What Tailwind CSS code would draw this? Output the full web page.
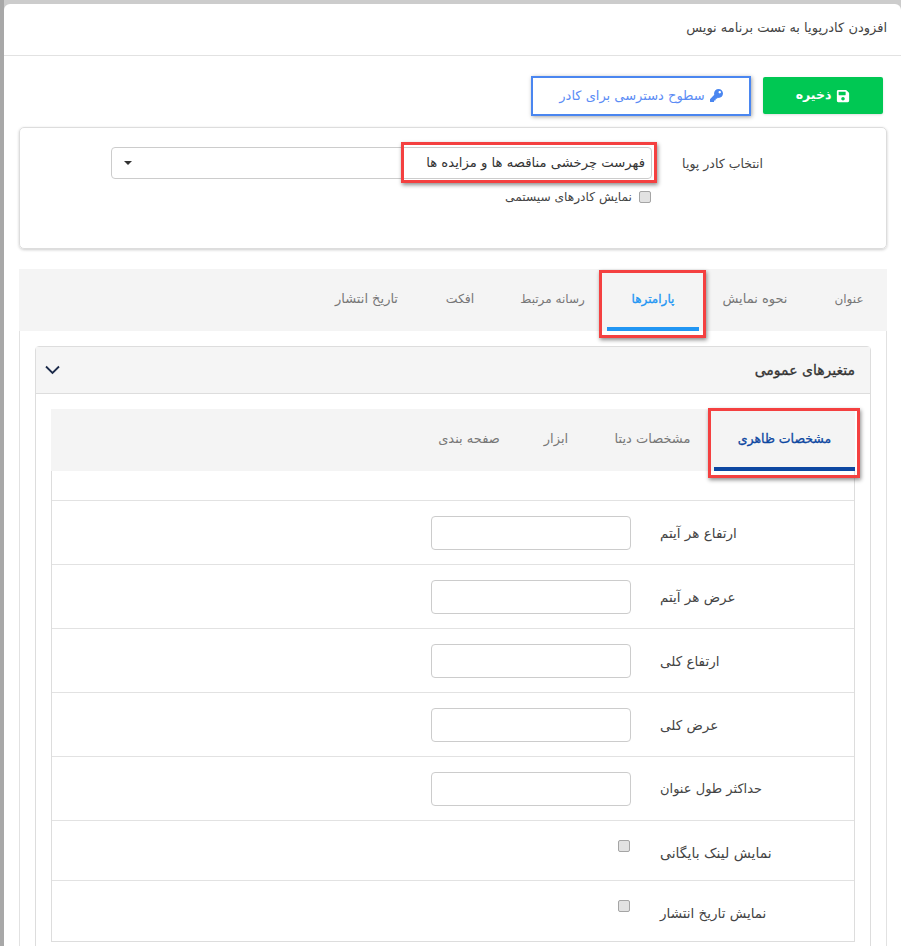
<!DOCTYPE html>
<html lang="fa" dir="rtl">
<head>
    <meta charset="UTF-8">
    <meta name="viewport" content="width=device-width, initial-scale=1.0">
    <title>افزودن کادرپویا</title>
    <script src="https://cdn.jsdelivr.net/npm/@tailwindcss/browser@4"></script>
</head>
<body class="bg-[linear-gradient(to_right,#a8a8a8_4px,#cccccc_4px)] font-['DejaVu_Sans',sans-serif] text-[13px] text-[#333] h-[946px] overflow-hidden">
    <div class="mt-[4px] ml-[4px] bg-white rounded-t-[6px] h-[942px] overflow-hidden">
        <header class="h-[52px] border-b border-[#e2e2e2] flex items-center pr-[14px] pb-[3px] text-[#444]">
            افزودن کادرپویا به تست برنامه نویس
        </header>

        <div class="flex items-center gap-[12px] pr-[18px] h-[71px] pt-[8px]">
            <button class="w-[120px] h-[37px] bg-[#00c853] rounded-[2px] text-white text-[12.5px] font-bold shadow-sm flex items-center justify-center gap-[5px]">
                <svg class="w-[14px] h-[14px] fill-white" viewBox="0 0 448 512"><path d="M433.941 129.941l-83.882-83.882A48 48 0 0 0 316.118 32H48C21.49 32 0 53.49 0 80v352c0 26.51 21.49 48 48 48h352c26.51 0 48-21.49 48-48V163.882a48 48 0 0 0-14.059-33.941zM224 416c-35.346 0-64-28.654-64-64 0-35.346 28.654-64 64-64s64 28.654 64 64c0 35.346-28.654 64-64 64zm96-304.52V212c0 6.627-5.373 12-12 12H76c-6.627 0-12-5.373-12-12V108c0-6.627 5.373-12 12-12h228.52c3.183 0 6.235 1.264 8.485 3.515l3.48 3.48A11.996 11.996 0 0 1 320 111.48z"/></svg>
                ذخیره
            </button>
            <button class="w-[220px] h-[40px] bg-white border-2 border-[#4a86f0] text-[#5b8cf5] shadow-[1px_1px_4px_rgba(0,0,0,0.35)] flex items-center justify-center gap-[5px]">
                <svg class="w-[13px] h-[13px] fill-[#4a86f0]" viewBox="0 0 512 512"><path d="M512 176.001C512 273.203 433.202 352 336 352c-11.22 0-22.19-1.062-32.827-3.069l-24.012 27.014A23.999 23.999 0 0 1 261.223 384H224v40c0 13.255-10.745 24-24 24h-40v40c0 13.255-10.745 24-24 24H24c-13.255 0-24-10.745-24-24v-78.059c0-6.365 2.529-12.47 7.029-16.971l161.802-161.802C163.108 213.814 160 195.271 160 176 160 78.798 238.797.001 335.999 0 433.488-.001 512 78.511 512 176.001zM336 128c0 26.51 21.49 48 48 48s48-21.49 48-48-21.49-48-48-48-48 21.49-48 48z"/></svg>
                سطوح دسترسی برای کادر
            </button>
        </div>

        <section class="mr-[14px] ml-[15px] h-[122px] border border-[#ddd] rounded-[5px] shadow-[0_1px_3px_rgba(0,0,0,0.2)] flex pt-[19px]">
            <label class="w-[234px] pr-[123px] pt-[8px] text-[12.5px] text-[#444] shrink-0">انتخاب کادر پویا</label>
            <div class="w-[541px]">
                <div class="relative h-[32px] border border-[#ccc] rounded-[4px] flex items-center justify-between pr-[6px] pl-[12px]">
                    <span class="text-[13.2px]">فهرست چرخشی مناقصه ها و مزایده ها</span>
                    <span class="w-0 h-0 border-x-[4px] border-x-transparent border-t-[4px] border-t-[#333]"></span>
                    <div class="absolute top-[-6px] right-[-6px] w-[256px] h-[41px] border-[3px] border-[#f44040] shadow-[1px_2px_4px_rgba(0,0,0,0.45)] pointer-events-none"></div>
                </div>
                <label class="flex items-center gap-[7px] mt-[9px] mr-[1px] text-[12.2px] text-[#444]">
                    <input type="checkbox" class="appearance-none w-[12px] h-[12px] bg-[#e2e2e2] border border-[#a5a5a5] rounded-[2px]">
                    نمایش کادرهای سیستمی
                </label>
            </div>
        </section>

        <section class="mt-[20px] mr-[14px] ml-[15px]">
            <nav class="h-[62px] bg-[#f4f4f4] flex text-[#777] text-center leading-[20px]">
                <a class="w-[76px] pt-[20px] text-[12px]">عنوان</a>
                <a class="w-[112px] pt-[20px]">نحوه نمایش</a>
                <a class="relative w-[92px] pt-[20px] text-[12px] text-[#2196f3] [-webkit-text-stroke:0.3px_#2196f3] border-b-[4px] border-[#2196f3]">
                    پارامترها
                    <span class="absolute top-[1px] right-[-7px] left-[-8px] h-[68px] border-[3px] border-[#f44040] shadow-[1px_2px_4px_rgba(0,0,0,0.45)]"></span>
                </a>
                <a class="w-[109px] pt-[20px] text-[12px]">رسانه مرتبط</a>
                <a class="w-[76px] pt-[20px] text-[12.5px]">افکت</a>
                <a class="w-[111px] pt-[20px]">تاریخ انتشار</a>
            </nav>

            <div class="border-x border-[#e2e2e2] px-[15px] pt-[15px] h-[700px]">
                <div class="border border-[#ddd] rounded-t-[4px] h-[700px]">
                    <div class="h-[47px] bg-[#f5f5f5] border-b border-[#ddd] flex items-center justify-between pr-[15px] pl-[9px]">
                        <span class="text-[14px] text-[#333] [-webkit-text-stroke:0.3px_#333]">متغیرهای عمومی</span>
                        <svg class="w-[15px] h-[10px] stroke-[#1c2b4a] fill-none stroke-[1.8]" viewBox="0 0 15 10"><path d="M1 1.5l6.5 6.5 6.5-6.5"/></svg>
                    </div>
                    <div class="px-[15px] pt-[15px]">
                        <nav class="h-[62px] bg-[#f4f4f4] flex text-[#777] text-center leading-[20px]">
                            <a class="relative w-[141px] pt-[20px] text-[12.5px] text-[#0d47a1] [-webkit-text-stroke:0.3px_#0d47a1] border-b-[4px] border-[#0d47a1]">
                                مشخصات ظاهری
                                <span class="absolute top-[-1px] right-[-5px] left-[-6px] h-[70px] border-[3px] border-[#f44040] shadow-[1px_2px_4px_rgba(0,0,0,0.45)]"></span>
                            </a>
                            <a class="w-[123px] pt-[20px]">مشخصات دیتا</a>
                            <a class="w-[70px] pt-[20px]">ابزار</a>
                            <a class="w-[104px] pt-[20px]">صفحه بندی</a>
                        </nav>
                        <div class="border border-t-0 border-[#ddd] text-[13.5px] text-[#444] divide-y divide-[#e2e2e2]">
                            <div class="h-[30px]"></div>
                            <div class="h-[64px] pt-[1px] flex items-center"><label class="w-[223px] pl-[29px] text-left shrink-0">ارتفاع هر آیتم</label><input type="text" class="w-[200px] h-[34px] border border-[#ccc] rounded-[4px]"></div>
                            <div class="h-[64px] pt-[1px] flex items-center"><label class="w-[223px] pl-[29px] text-left shrink-0">عرض هر آیتم</label><input type="text" class="w-[200px] h-[34px] border border-[#ccc] rounded-[4px]"></div>
                            <div class="h-[64px] pt-[1px] flex items-center"><label class="w-[223px] pl-[29px] text-left shrink-0">ارتفاع کلی</label><input type="text" class="w-[200px] h-[34px] border border-[#ccc] rounded-[4px]"></div>
                            <div class="h-[64px] pt-[1px] flex items-center"><label class="w-[223px] pl-[29px] text-left shrink-0">عرض کلی</label><input type="text" class="w-[200px] h-[34px] border border-[#ccc] rounded-[4px]"></div>
                            <div class="h-[64px] pt-[1px] flex items-center"><label class="w-[223px] pl-[29px] text-[13px] text-left shrink-0">حداکثر طول عنوان</label><input type="text" class="w-[200px] h-[34px] border border-[#ccc] rounded-[4px]"></div>
                            <div class="h-[60px] flex items-start"><label class="w-[223px] pl-[29px] pt-[22px] text-[14px] text-left shrink-0">نمایش لینک بایگانی</label><input type="checkbox" class="appearance-none mt-[19px] mr-[1px] w-[12px] h-[12px] bg-[#e2e2e2] border border-[#a5a5a5] rounded-[2px]"></div>
                            <div class="h-[60px] flex items-start"><label class="w-[223px] pl-[29px] pt-[22px] text-left shrink-0">نمایش تاریخ انتشار</label><input type="checkbox" class="appearance-none mt-[19px] mr-[1px] w-[12px] h-[12px] bg-[#e2e2e2] border border-[#a5a5a5] rounded-[2px]"></div>
                        </div>
                    </div>
                </div>
            </div>
        </section>
    </div>
</body>
</html>
